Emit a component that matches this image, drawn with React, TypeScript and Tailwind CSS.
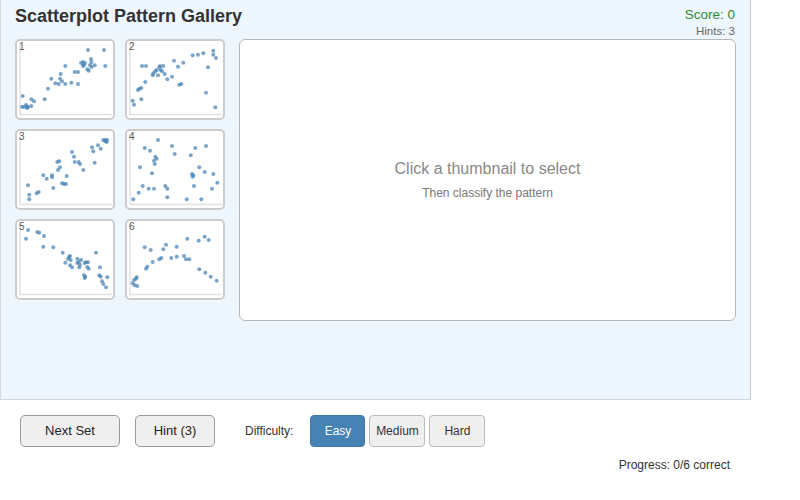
import { useState } from 'react';

type Pt = [number, number];

// dot coordinates inside each thumbnail (96 x 77 inner area)
const plots: Pt[][] = [
  [
    [5.7, 55], [5, 65.7], [7, 66], [9, 64], [10, 67], [11, 66], [10, 65.5], [14.3, 65], [14.3, 58.3], [17, 60.3],
    [27.7, 58.3], [31, 47.7], [34.3, 37.7], [38.3, 42.3], [41.7, 43], [43, 37.7], [43.7, 33], [45, 40.3], [48.3, 25],
    [48.3, 43], [54.3, 41.7], [57.7, 31], [61, 31], [61, 43], [64, 22], [66, 21], [67, 24], [66, 25], [68, 22],
    [71, 9], [70.3, 28.3], [71.7, 29.7], [74, 18], [74.5, 21], [73, 24], [74.5, 26], [77.7, 24.3], [87, 9], [88.3, 25],
  ],
  [
    [5.7, 59.7], [7, 63.7], [11, 49], [12.3, 47.7], [14.3, 47], [14.3, 58.3], [15, 25], [19, 25], [18.3, 41],
    [25.7, 34.3], [26.3, 32.3], [28.3, 30.3], [29.7, 29], [31, 34.3], [32.3, 26.3], [33.7, 29], [35, 30.3], [33, 25],
    [36.3, 25], [37.7, 33], [40.3, 38.3], [45, 35.7], [47, 19.7], [51, 25.7], [52.3, 43.7], [54.3, 43], [56.3, 21.7],
    [65.7, 14.3], [71, 13.7], [76.3, 12.3], [81, 26.3], [79, 51.7], [86.3, 9.7], [86.3, 13.7], [89, 17], [88.3, 66.3],
  ],
  [
    [11, 54.3], [12.3, 63.7], [12.3, 68.3], [19.7, 62.3], [21.7, 61], [26.3, 44.3], [29.7, 47.7], [35, 44.3], [35, 46.3],
    [36.3, 57], [40.3, 31], [42.3, 30.3], [41, 39], [43, 36.3], [45, 52.3], [47, 53], [49, 53], [49.7, 45], [55, 21],
    [57, 25.7], [57.7, 31], [61.7, 31], [63, 33], [66.3, 39], [75, 16.3], [76.3, 20.3], [77.7, 31.7], [81, 14.3],
    [83.7, 17.7], [86.3, 9], [88.3, 9], [90, 9], [89.7, 11], [88.3, 10.3],
  ],
  [
    [6.3, 68.3], [11.7, 61.7], [13, 36.3], [15.7, 55], [17.7, 17], [21.7, 57.7], [23, 19.7], [25, 42.3], [27, 57.7],
    [27, 29.7], [27.7, 33], [28.3, 25.7], [29.7, 27.7], [31, 9], [38.3, 55], [40.3, 57.7], [40.3, 66.3], [45, 15],
    [47.7, 23], [59.7, 68.3], [63.7, 24.3], [65, 43], [66.3, 44.3], [65.7, 45.7], [67, 55], [68.3, 17], [72.3, 36.3],
    [74.3, 68.3], [77.7, 41], [79, 15], [85, 57.7], [86.3, 43], [90.3, 51.7],
  ],
  [
    [9, 17.7], [11, 9], [20.3, 11], [22.3, 11.7], [27, 15], [26.3, 25.7], [36.3, 26.3], [45.7, 31.7], [48.3, 41.7],
    [51, 38], [52, 36], [53, 35], [53.7, 39], [53, 44.3], [55, 46.3], [60.3, 37.7], [60.3, 42], [61.7, 41], [63, 43.7],
    [64, 39], [62.3, 46.3], [67.7, 42], [69, 41.3], [71, 41.3], [70.3, 46], [71.7, 47.7], [67, 54.3], [67.7, 57],
    [68.3, 55.7], [79, 31.7], [83, 46.3], [82.3, 54.3], [83.7, 55.7], [85, 60.3], [86.3, 63], [90.3, 56.3], [89, 66.3],
  ],
  [
    [5.7, 62.3], [7, 59], [9, 57.7], [9.7, 56.3], [7.7, 64.3], [10.3, 65], [17.7, 26.3], [19, 47.7], [20.3, 45.7],
    [23.7, 29], [25.7, 41], [32.3, 38.3], [34.3, 37], [36.3, 28.3], [39, 23.7], [44.3, 37], [49.7, 25.7], [49.7, 35.7],
    [57, 35], [59, 38.3], [62.3, 38.3], [60.3, 17.7], [71.7, 19.7], [72.3, 48.3], [77.7, 15.7], [78.3, 51.7],
    [81.7, 19], [83.7, 55.7], [89.7, 59.7],
  ],
];

function Thumbnail({ index, dots }: { index: number; dots: Pt[] }) {
  return (
    <div className="relative w-[100px] h-[81px] bg-white border-2 border-[#cccccc] rounded-[5px] cursor-pointer">
      <svg className="absolute left-0 top-0" width="96" height="77" viewBox="0 0 96 77">
        <line x1="3" y1="3" x2="3" y2="73.5" stroke="#e2e2e2" strokeWidth="1.5" />
        <line x1="2.25" y1="73.5" x2="95" y2="73.5" stroke="#e2e2e2" strokeWidth="1.5" />
        {dots.map(([x, y], i) => (
          <circle key={i} cx={x} cy={y} r="2" fill="#4682b4" fillOpacity="0.72" />
        ))}
      </svg>
      <span className="absolute left-[2px] top-0 text-[10px] leading-[12px] text-[#555555]">{index}</span>
    </div>
  );
}

export default function App() {
  const [level, setLevel] = useState('Easy');

  return (
    <div className="w-[800px] h-[500px] bg-white font-['Liberation_Sans',Arial,sans-serif] text-[#333333]">
      <div className="w-[751px] h-[400px] bg-[#eef6fe] border-x border-b border-l-[#d4dbe2] border-r-[#c8c8c8] border-b-[#d0d7de] px-[14px]">
        <div className="flex justify-between h-[39px] pt-[6px]">
          <h1 className="text-[18px] font-bold leading-[21px] text-[#333333]">Scatterplot Pattern Gallery</h1>
          <div className="flex flex-col items-end pr-px">
            <div className="text-[13.5px] leading-[16px] mt-[1px] text-[#2e8b2e]">Score: 0</div>
            <div className="text-[11.5px] leading-[13px] mt-[2px] text-[#666666]">Hints: 3</div>
          </div>
        </div>

        <div className="flex">
          <div className="grid grid-cols-2 gap-x-[10px] gap-y-[9px] w-[210px] content-start">
            {plots.map((dots, i) => (
              <Thumbnail key={i} index={i + 1} dots={dots} />
            ))}
          </div>

          <div className="ml-[14px] flex-1 h-[282px] bg-white border border-[#b8b8b8] rounded-[6px] flex flex-col items-center justify-center">
            <div className="text-[16px] leading-[18px] text-[#888888]">Click a thumbnail to select</div>
            <div className="text-[12px] leading-[14px] mt-[8px] text-[#777777]">Then classify the pattern</div>
          </div>
        </div>
      </div>

      <div className="w-[751px] flex items-center mt-[15px] pl-[20px]">
        <button className="w-[100px] h-[32px] bg-[#efefef] border border-[#999999] rounded-[5px] text-[13px] text-[#222222]">
          Next Set
        </button>
        <button className="ml-[15px] w-[80px] h-[32px] bg-[#efefef] border border-[#999999] rounded-[5px] text-[13px] text-[#222222]">
          Hint (3)
        </button>
        <span className="ml-[30px] text-[12px] text-[#333333]">Difficulty:</span>
        <div className="ml-[17px] flex gap-[4px]">
          {['Easy', 'Medium', 'Hard'].map((l) => (
            <button
              key={l}
              onClick={() => setLevel(l)}
              className={
                level === l
                  ? 'w-[55px] h-[32px] bg-[#4682b4] border border-[#4178a8] rounded-[4px] text-[12px] text-white'
                  : 'w-[56px] h-[32px] bg-[#efefef] border border-[#bbbbbb] rounded-[4px] text-[12px] text-[#333333]'
              }
            >
              {l}
            </button>
          ))}
        </div>
      </div>

      <div className="w-[751px] text-right pr-[21px] mt-[11px] text-[12px] leading-[14px] text-[#333333]">
        Progress: 0/6 correct
      </div>
    </div>
  );
}
